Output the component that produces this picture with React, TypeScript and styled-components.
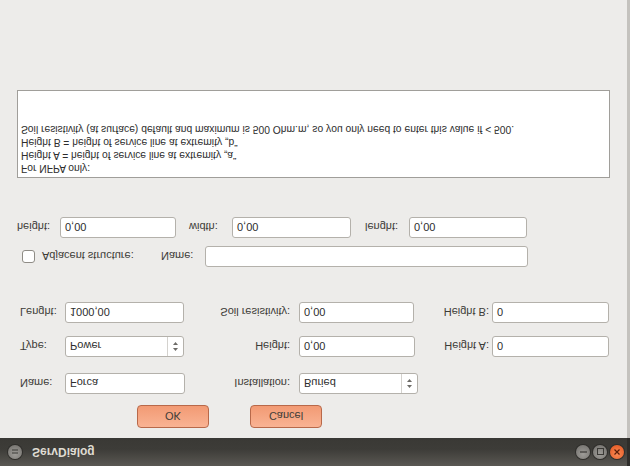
import * as React from "react";
import styled, { createGlobalStyle } from "styled-components";

const Global = createGlobalStyle`
  html, body {
    margin: 0;
    padding: 0;
    background: #edecea;
  }
`;

// the screenshot shows the dialog upside down, so the whole window is mirrored vertically
const Window = styled.div`
  width: 630px;
  height: 466px;
  display: flex;
  flex-direction: column;
  transform: scaleY(-1);
  font-family: "Liberation Sans", Arial, sans-serif;
  font-size: 11px;
  color: #3c3b37;
  overflow: hidden;
`;

const TitleBar = styled.div`
  height: 28px;
  flex: none;
  display: flex;
  align-items: center;
  padding: 0 0 0 8px;
  background: linear-gradient(#5a5853, #3d3c38 60%, #3a3935);
  border-right: 3px solid #2e2d2a;
`;

const Title = styled.span`
  margin-left: 7px;
  font-weight: bold;
  font-size: 12px;
  color: #dfdbd2;
  flex: 1;
`;

const WinButton = styled.div<{ $close?: boolean }>`
  width: 14px;
  height: 14px;
  border-radius: 50%;
  margin-right: 3px;
  display: flex;
  align-items: center;
  justify-content: center;
  background: ${(p) =>
    p.$close
      ? "radial-gradient(circle at 50% 35%, #f88a55, #e2531d)"
      : "radial-gradient(circle at 50% 35%, #9e9c98, #6f6d69)"};
  box-shadow: 0 0 0 1px #2f2e2b;
`;

const Body = styled.div`
  flex: 1;
  display: flex;
  flex-direction: column;
  background: #edecea;
  border-right: 3px solid #c4c2be;
`;

const ButtonRow = styled.div`
  display: flex;
  gap: 41px;
  margin: 10px 0 0 137px;
`;

const PushButton = styled.button`
  width: 72px;
  height: 23px;
  padding: 0;
  border: 1px solid #b8694a;
  border-radius: 4px;
  background: linear-gradient(#f9b393, #f29a74);
  color: #3c3b37;
  font-family: inherit;
  font-size: 11px;
`;

const FormRow = styled.div<{ $top: number }>`
  display: grid;
  grid-template-columns: 45px 120px 114px 119px 74px 117px;
  align-items: center;
  margin: ${(p) => p.$top}px 0 0 20px;
`;

const Label = styled.span<{ $right?: boolean; $left?: number; $w?: number }>`
  white-space: nowrap;
  text-align: ${(p) => (p.$right ? "right" : "left")};
  padding-right: ${(p) => (p.$right ? "9px" : "0")};
  margin-left: ${(p) => p.$left ?? 0}px;
  ${(p) => (p.$w ? `width: ${p.$w}px; flex: none;` : "")}
`;

const SmallLabel = styled(Label)`
  padding-right: ${(p) => (p.$right ? "3px" : "0")};
`;

const Field = styled.div<{ $w?: number }>`
  width: ${(p) => (p.$w ? `${p.$w}px` : "100%")};
  flex: none;
  height: 21px;
  box-sizing: border-box;
  border: 1px solid #b4b1ab;
  border-radius: 3px;
  background: #fff;
  display: flex;
  align-items: center;
  padding-left: 4px;
  color: #2d2d2d;
  font-size: 11px;
`;

const ComboBox = styled(Field)`
  padding-right: 0;
`;

const ComboText = styled.span`
  flex: 1;
`;

const Spinner = styled.div`
  width: 15px;
  height: 100%;
  border-left: 1px solid #d4d2ce;
  display: flex;
  align-items: center;
  justify-content: center;
`;

const Line = styled.div<{ $top: number }>`
  display: flex;
  align-items: center;
  margin-top: ${(p) => p.$top}px;
`;

const CheckBox = styled.div`
  width: 13px;
  height: 13px;
  box-sizing: border-box;
  border: 1px solid #8f8c86;
  border-radius: 3px;
  background: #fff;
  margin-left: 22px;
`;

const Note = styled.div`
  margin: 39px 0 0 17px;
  width: 593px;
  height: 88px;
  box-sizing: border-box;
  border: 1px solid #a09e9a;
  background: #fff;
  padding: 2px 3px;
  line-height: 13px;
  font-size: 10.3px;
  color: #2d2d2d;
  white-space: pre-line;
`;

function Arrows() {
  return (
    <svg width="7" height="11" viewBox="0 0 7 11">
      <path d="M3.5 1 L6 4 L1 4 Z" fill="#6d6b67" />
      <path d="M3.5 10 L6 7 L1 7 Z" fill="#6d6b67" />
    </svg>
  );
}

function Combo({ value, w }: { value: string; w: number }) {
  return (
    <ComboBox $w={w}>
      <ComboText>{value}</ComboText>
      <Spinner>
        <Arrows />
      </Spinner>
    </ComboBox>
  );
}

export default function App() {
  return (
    <Window>
      <Global />
      <TitleBar>
        <WinButton>
          <svg width="6" height="5" viewBox="0 0 6 5">
            <path d="M0 1h6M0 4h6" stroke="#3b3a36" strokeWidth="1" />
          </svg>
        </WinButton>
        <Title>ServDialog</Title>
        <WinButton>
          <svg width="7" height="2" viewBox="0 0 7 2">
            <path d="M0 1h7" stroke="#3b3a36" strokeWidth="1.2" />
          </svg>
        </WinButton>
        <WinButton>
          <svg width="7" height="7" viewBox="0 0 7 7">
            <rect x="0.5" y="0.5" width="6" height="6" fill="none" stroke="#3b3a36" />
          </svg>
        </WinButton>
        <WinButton $close>
          <svg width="6" height="6" viewBox="0 0 6 6">
            <path d="M0.5 0.5L5.5 5.5M5.5 0.5L0.5 5.5" stroke="#5a1d08" strokeWidth="1.2" />
          </svg>
        </WinButton>
      </TitleBar>
      <Body>
        <ButtonRow>
          <PushButton>OK</PushButton>
          <PushButton>Cancel</PushButton>
        </ButtonRow>

        <FormRow $top={11}>
          <Label>Name:</Label>
          <Field $w={120}>Forca</Field>
          <Label $right>Installation:</Label>
          <Combo value="Buried" w={119} />
        </FormRow>
        <FormRow $top={16}>
          <Label>Type:</Label>
          <Combo value="Power" w={119} />
          <Label $right>Height:</Label>
          <Field $w={116}>0,00</Field>
          <SmallLabel $right>Height A:</SmallLabel>
          <Field>0</Field>
        </FormRow>
        <FormRow $top={13}>
          <Label>Lenght:</Label>
          <Field $w={119}>1000,00</Field>
          <Label $right>Soil resistivity:</Label>
          <Field $w={115}>0,00</Field>
          <SmallLabel $right>Height B:</SmallLabel>
          <Field>0</Field>
        </FormRow>

        <Line $top={35}>
          <CheckBox />
          <Label $left={7} $w={119}>Adjacent structure:</Label>
          <Label $w={44}>Name:</Label>
          <Field $w={323} />
        </Line>
        <Line $top={8}>
          <Label $left={17} $w={43}>height:</Label>
          <Field $w={116}>0,00</Field>
          <Label $left={13} $w={43}>width:</Label>
          <Field $w={119}>0,00</Field>
          <Label $left={14} $w={44}>lenght:</Label>
          <Field $w={118}>0,00</Field>
        </Line>

        <Note>
          {"For NFPA only:\nHeight A = height of service line at extremity \u201ea\u201c\nHeight B = height of service line at extremity \u201eb\u201c\nSoil resistivity (at surface) default and maximum is 500 Ohm.m, so you only need to enter this value if < 500."}
        </Note>
      </Body>
    </Window>
  );
}
